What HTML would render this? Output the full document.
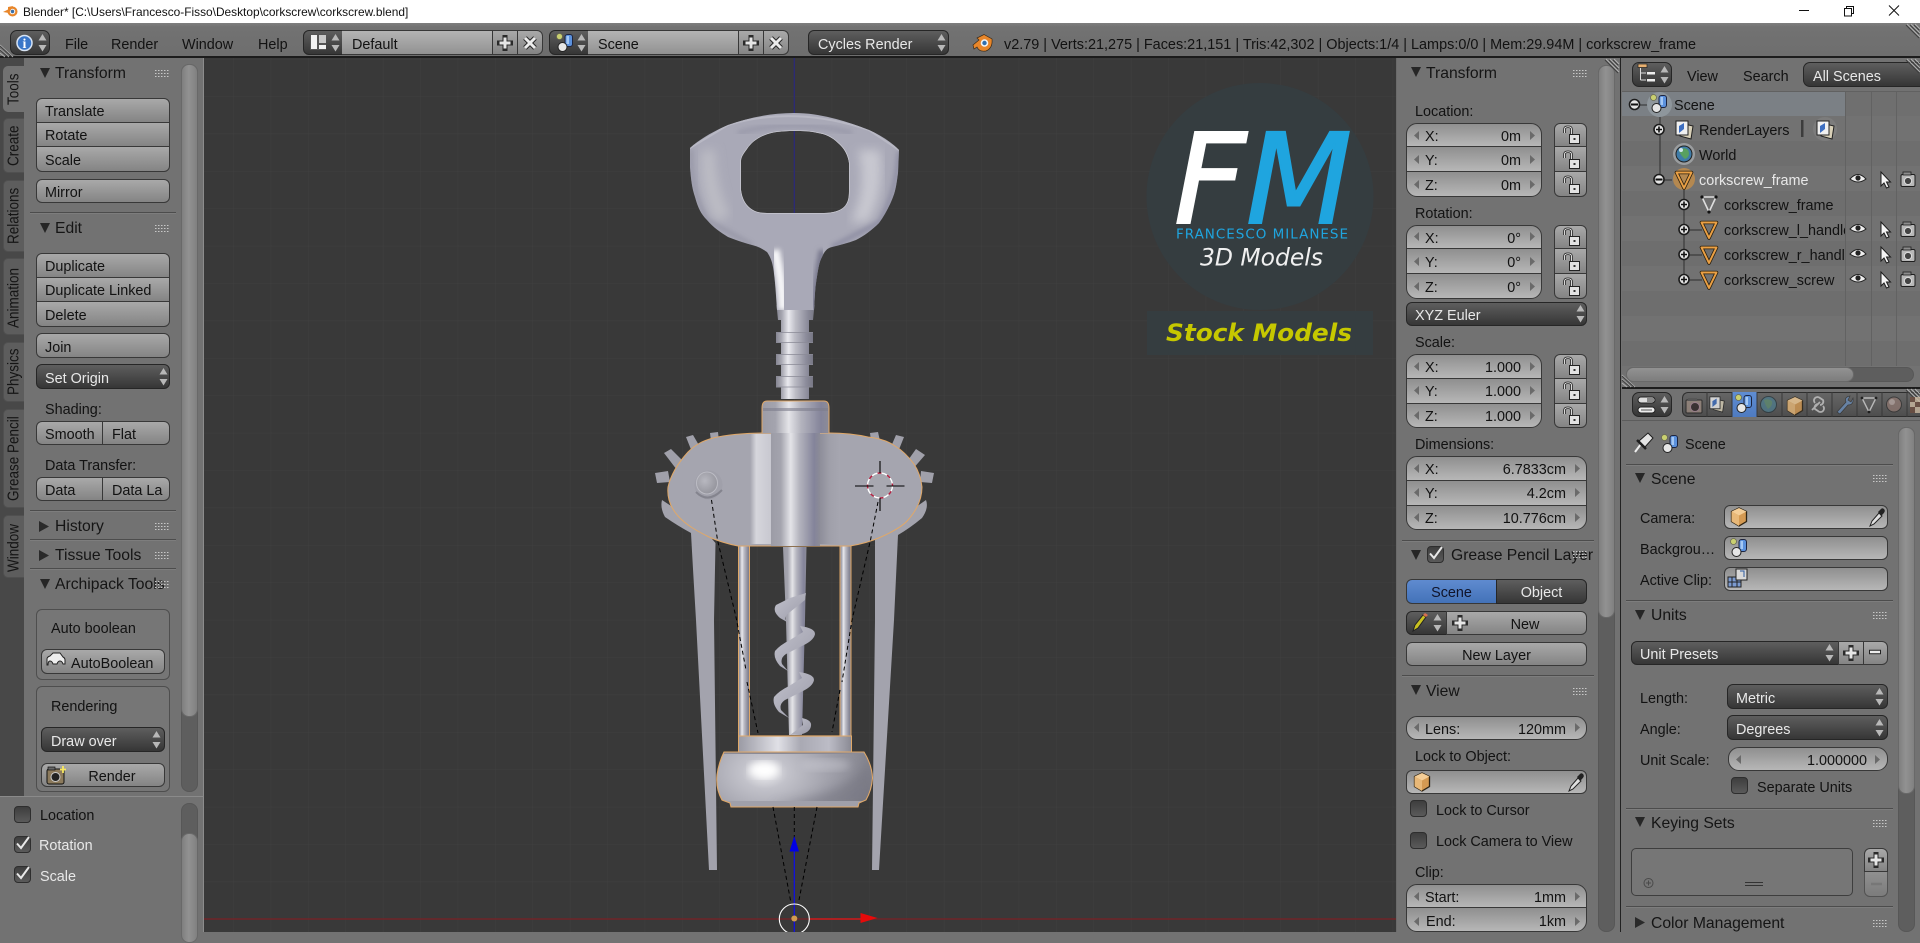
<!DOCTYPE html>
<html><head><meta charset="utf-8"><title>Blender</title>
<style>
html,body{margin:0;padding:0;width:1920px;height:932px;overflow:hidden;background:#727272;font-family:"Liberation Sans",sans-serif}
.a{position:absolute}
.t{position:absolute;white-space:nowrap;line-height:16px;font-size:14.4px;color:#121212;margin-top:1px}
.w{color:#e8e8e8}
.h{font-size:15.7px;line-height:18px;color:#151515}
.c{text-align:center}
.b{position:absolute;box-sizing:border-box;border:1px solid #383838;background:linear-gradient(#a9a9a9,#848484)}
.n{background:linear-gradient(#8f8f8f,#b7b7b7)}
.d{background:linear-gradient(#5e5e5e,#363636);border-color:#262626}
.r{border-radius:6px}.rt{border-radius:6px 6px 0 0}.rb{border-radius:0 0 6px 6px}
.pp{border-radius:11px}.pt{border-radius:11px 11px 0 0}.pb{border-radius:0 0 11px 11px}
.rl{border-radius:6px 0 0 6px}.rr{border-radius:0 6px 6px 0}
.l{position:absolute;height:1px;background:#4c4c4c;box-shadow:0 1px 0 #7d7d7d}
.s{position:absolute;box-sizing:border-box;border-radius:8px;background:#5e5e5e;border:1px solid #575757}
.th{background:linear-gradient(90deg,#7f7f7f,#929292 45%,#808080);border-color:#696969}
.tab{position:absolute;left:3px;width:21px;box-sizing:border-box;background:#5d5d5d;border-radius:5px 0 0 5px;border:1px solid #505050;border-right:0}
.tt{position:absolute;white-space:nowrap;font-size:14.5px;line-height:16px;color:#151515;transform-origin:0 0;transform:rotate(-90deg) scale(.93,1.05)}
.cb{position:absolute;box-sizing:border-box;width:17px;height:17px;border-radius:4px;border:1px solid #2e2e2e;background:linear-gradient(#3e3e3e,#5a5a5a)}
</style></head>
<body>
<!-- VIEWPORT -->
<svg class="a" style="left:0;top:0" width="1920" height="932" viewBox="0 0 1920 932">
<defs>
<pattern id="grid" width="37.4" height="37.4" patternUnits="userSpaceOnUse" patternTransform="translate(794.3 919)"><path d="M0 0H37.4M0 0V37.4" stroke="#404040" stroke-width="1" fill="none"/></pattern>
<linearGradient id="cyl"><stop offset="0" stop-color="#858592"/><stop offset=".14" stop-color="#a6a6b0"/><stop offset=".32" stop-color="#e9e9ee"/><stop offset=".5" stop-color="#bdbdc6"/><stop offset=".82" stop-color="#8b8b9a"/><stop offset="1" stop-color="#777784"/></linearGradient>
<linearGradient id="cyl2"><stop offset="0" stop-color="#9c9ca6"/><stop offset=".2" stop-color="#a4a4ae"/><stop offset=".4" stop-color="#e4e4e8"/><stop offset=".58" stop-color="#b4b4be"/><stop offset=".88" stop-color="#84849a"/><stop offset="1" stop-color="#8c8c98"/></linearGradient>
<linearGradient id="band"><stop offset="0" stop-color="#a4a4ae"/><stop offset=".3" stop-color="#d6d6dc"/><stop offset="1" stop-color="#c8c8d0"/></linearGradient>
<linearGradient id="band2"><stop offset="0" stop-color="#8e8e9a"/><stop offset=".5" stop-color="#a0a0aa"/><stop offset="1" stop-color="#a6a6b0"/></linearGradient>
<linearGradient id="collar"><stop offset="0" stop-color="#9a9aa4"/><stop offset=".35" stop-color="#e0e0e6"/><stop offset=".55" stop-color="#a9a9b3"/><stop offset=".8" stop-color="#bcbcc6"/><stop offset="1" stop-color="#8a8a94"/></linearGradient>
<linearGradient id="blade" x1="0" y1="0" x2="1" y2="1"><stop offset="0" stop-color="#c2c2cc"/><stop offset="1" stop-color="#9a9aa8"/></linearGradient>
<radialGradient id="foot" gradientUnits="userSpaceOnUse" cx="765" cy="772" r="105" gradientTransform="translate(0 232) scale(1 .7)"><stop offset="0" stop-color="#f0f0f2"/><stop offset=".22" stop-color="#c2c2ca"/><stop offset=".6" stop-color="#a2a2ac"/><stop offset="1" stop-color="#84848e"/></radialGradient>
<radialGradient id="riv" cx=".4" cy=".4" r=".7"><stop offset="0" stop-color="#b8b8c0"/><stop offset="1" stop-color="#909098"/></radialGradient>
<filter id="bl"><feGaussianBlur stdDeviation="5"/></filter>
<filter id="bl2"><feGaussianBlur stdDeviation="2.5"/></filter>
<filter id="bl3"><feGaussianBlur stdDeviation="4"/></filter>
<clipPath id="hc"><path clip-rule="evenodd" d="M794,113 C770,113 748,118 728,125 C712,132 700,139 690,148 L690,167 C691,180 692,188 695,197 C698,208 701,214 707,220 C714,228 720,232 728,237 C738,241 745,243 752,245 C760,247 764,250 767,252 C771,258 772,262 773,267 C775,278 776,295 777,310 L814,310 C815,295 815,290 816,283 C818,270 819,262 822,257 C825,250 828,248 832,247 C840,245 848,243 856,240 C864,236 872,230 879,223 C885,215 890,205 893,197 C896,190 897,180 898,173 L899,150 C890,141 880,135 869,130 C856,125 845,121 832,118 C820,115 808,113 794,113 Z M794,131 C782,131 772,132 765,135 C757,138 751,143 747,149 C744,153 741,157 741,161 L741,190 C742,198 745,204 750,208 C755,212 760,213 767,213 L824,213 C832,213 840,211 844,207 C848,203 849,198 849,191 L849,163 C848,155 844,148 838,143 C832,137 825,134 818,133 C810,131 803,131 794,131 Z"/></clipPath>
<clipPath id="fc"><path d="M724,752 C720,760 718,768 717,775 C716,785 718,793 722,800 L730,803 L731,807 L858,807 L859,803 L866,800 C870,793 872,785 872.5,778 C872,768 869,760 864,752 Z"/></clipPath>
</defs>
<rect x="204" y="58" width="1192" height="874" fill="#393939"/>
<rect x="204" y="58" width="1192" height="874" fill="url(#grid)"/>
<line x1="204" y1="919" x2="1396" y2="919" stroke="#702428" stroke-width="1.5"/>
<line x1="794.3" y1="58" x2="794.3" y2="213" stroke="#2b2a78" stroke-width="1.3"/>
<!-- logo -->
<circle cx="1260" cy="196.5" r="113.5" fill="#353d40"/>
<rect x="1147" y="311" width="226" height="44" fill="#353d40"/>
<text x="1174" y="223" font-family="DejaVu Sans" font-style="oblique" font-size="125" fill="#fff" stroke="#fff" stroke-width="2" textLength="72" lengthAdjust="spacingAndGlyphs">F</text>
<text x="1246" y="223" font-family="DejaVu Sans" font-style="oblique" font-size="125" fill="#1fa5df" stroke="#1fa5df" stroke-width="2" textLength="106" lengthAdjust="spacingAndGlyphs">M</text>
<text x="1176" y="238.5" font-family="DejaVu Sans" font-size="13.5" fill="#1fa5df" textLength="172" lengthAdjust="spacing">FRANCESCO MILANESE</text>
<text x="1200" y="265.5" font-family="DejaVu Sans" font-style="oblique" font-size="24" fill="#f0f0f0" textLength="123" lengthAdjust="spacingAndGlyphs">3D Models</text>
<text x="1166" y="341" font-family="DejaVu Sans" font-weight="bold" font-style="oblique" font-size="24" fill="#c6c800" textLength="186" lengthAdjust="spacingAndGlyphs">Stock Models</text>
<!-- legs -->
<path fill="#a3a3ad" d="M662,500 Q660,508 665,517 Q678,526 691,533 Q693,570 696,620 L709,870 L717,870 L714,620 L715.5,543 L700,525 Z"/>
<path fill="#a3a3ad" d="M926,500 Q929,508 922,518 Q910,528 898,535 L894,620 L879,870 L872,870 L875,620 L875,540 L890,525 Z"/>
<!-- teeth -->
<g fill="#a0a0aa">
<path d="M655,473 L668,471 L670,482 L657,483 Z"/><path d="M664,453 L671,449 L684,462 L677,470 Z"/><path d="M686,437 L693,435 L700,447 L692,452 Z"/><path d="M710,433 L718,432 L719,441 L711,441 Z"/>
<path d="M870,433 L878,432 L880,441 L871,441 Z"/><path d="M896,435 L904,437 L898,452 L890,449 Z"/><path d="M916,449 L925,455 L912,470 L906,463 Z"/><path d="M921,471 L934,473 L932,483 L920,482 Z"/>
</g>
<!-- frame columns -->
<rect x="738.5" y="546" width="11" height="190" fill="url(#cyl)" stroke="#e0a868"/>
<rect x="840" y="546" width="11" height="190" fill="url(#cyl)" stroke="#e0a868"/>
<!-- screw -->
<path d="M783,547 H806.5 L805,620 L802,735 H789 L786,620 Z" fill="url(#cyl2)"/>
<g fill="url(#blade)">
<path d="M806,593 L805,600 L790,612 Q783,617 787,622 L780,618 Q772,611 776,605 L790,598Z"/>
<path d="M800,626 Q815,628 815,634 Q814,640 804,645 L786,654 Q780,658 782,664 L788,671 L780,666 Q773,658 775,651 Q780,645 790,640 L803,632 Z"/>
<path d="M799,672 Q814,674 814,680 Q813,686 803,691 L785,700 Q779,704 781,710 L789,718 L779,712 Q772,704 774,697 Q779,691 789,686 L802,678 Z"/>
<path d="M802,718 Q812,720 811,726 Q810,732 802,734 L790,735 Q797,730 803,725Z"/>
</g>
<!-- collar & foot -->
<rect x="738.5" y="736" width="113" height="16" fill="url(#collar)" stroke="#e0a868"/>
<line x1="749" y1="736" x2="840" y2="736" stroke="#e0a868" stroke-width="1.2"/>
<path d="M724,752 C720,760 718,768 717,775 C716,785 718,793 722,800 L730,803 L731,807 L858,807 L859,803 L866,800 C870,793 872,785 872.5,778 C872,768 869,760 864,752 Z" fill="url(#foot)"/>
<g clip-path="url(#fc)"><path d="M770,805 Q850,795 868,760 L880,810 Z" fill="#72727e" opacity=".55" filter="url(#bl)"/><ellipse cx="764" cy="770" rx="15" ry="8" fill="#fff" filter="url(#bl3)"/><ellipse cx="825" cy="765" rx="25" ry="6" fill="#cdcdd5" opacity=".45" filter="url(#bl3)"/><rect x="716" y="801" width="160" height="6" fill="#a0a0aa"/><rect x="716" y="752" width="160" height="2" fill="#8a8a96"/></g>
<path d="M724,752 C720,760 718,768 717,775 C716,785 718,793 722,800 L730,803 L731,807 L858,807 L859,803 L866,800 C870,793 872,785 872.5,778 C872,768 869,760 864,752 Z" fill="none" stroke="#e0a868" stroke-width="1.1"/>
<!-- neck & rings -->
<path d="M776.5,305 H814.5 L813,320 H809 V399 H781 V320 H778 Z" fill="url(#cyl)"/>
<rect x="776" y="332" width="37" height="11" fill="url(#cyl)"/><rect x="776" y="354" width="37" height="11" fill="url(#cyl)"/><rect x="776" y="376" width="37" height="11.5" fill="url(#cyl)"/>
<path d="M776 332.5H813M776 354.5H813M776 376.5H813M776 342.5H813M776 364.5H813M776 387H813" stroke="#8a8a96" stroke-width=".8"/>
<!-- body -->
<path d="M762,433 C745,433 725,435 713,438 C702,441 695,445 688,452 C678,463 671,474 668,487 C667,497 670,507 678,516 C686,525 697,531 709,537 C718,541 728,544 738,546 H850 C862,544 872,541 881,537 C892,532 903,526 908,520 C916,511 922,500 922,487 C921,478 918,470 914,464 C908,456 902,450 895,446 C888,441 878,438 868,437 C855,434 840,433 829,433 Z" fill="#a5a5af" stroke="#e0a868" stroke-width="1"/>
<rect x="750" y="434" width="21" height="110" fill="url(#band)"/>
<rect x="820" y="434" width="20" height="110" fill="url(#band2)"/>
<rect x="771" y="433" width="49" height="113" fill="url(#cyl2)"/>
<path d="M762,433 V408 Q762,401 767,401 H824 Q829,401 829,408 V433" fill="url(#cyl2)" stroke="#e0a868"/>
<rect x="763" y="408" width="65" height="3" fill="#7d7d8c" opacity=".6"/>
<!-- handle -->
<path fill-rule="evenodd" fill="#a9a9b7" d="M794,113 C770,113 748,118 728,125 C712,132 700,139 690,148 L690,167 C691,180 692,188 695,197 C698,208 701,214 707,220 C714,228 720,232 728,237 C738,241 745,243 752,245 C760,247 764,250 767,252 C771,258 772,262 773,267 C775,278 776,295 777,310 L814,310 C815,295 815,290 816,283 C818,270 819,262 822,257 C825,250 828,248 832,247 C840,245 848,243 856,240 C864,236 872,230 879,223 C885,215 890,205 893,197 C896,190 897,180 898,173 L899,150 C890,141 880,135 869,130 C856,125 845,121 832,118 C820,115 808,113 794,113 Z M794,131 C782,131 772,132 765,135 C757,138 751,143 747,149 C744,153 741,157 741,161 L741,190 C742,198 745,204 750,208 C755,212 760,213 767,213 L824,213 C832,213 840,211 844,207 C848,203 849,198 849,191 L849,163 C848,155 844,148 838,143 C832,137 825,134 818,133 C810,131 803,131 794,131 Z"/>
<g clip-path="url(#hc)">
<path d="M715,150 Q715,185 730,215 L716,222 Q698,190 702,150 Z" fill="#bcbcc4" filter="url(#bl)"/>
<path d="M858,150 Q868,190 850,222 L868,222 Q886,190 880,150 Z" fill="#c8c8d0" filter="url(#bl)"/>
<path d="M738,133 Q794,118 852,133" fill="none" stroke="#9494a6" stroke-width="5" opacity=".7" filter="url(#bl2)"/>
<path d="M691,150 Q690,190 707,220 L752,245" fill="none" stroke="#8c8c9c" stroke-width="3" opacity=".8" filter="url(#bl2)"/>
<path d="M899,152 Q897,190 880,222 L832,247" fill="none" stroke="#82829a" stroke-width="4" opacity=".8" filter="url(#bl2)"/>
<path d="M690,148 L728,125 Q794,105 869,130 L899,150" fill="none" stroke="#b8b8c4" stroke-width="2"/>
<path d="M775,250 Q782,280 783,310" stroke="#f6f6f8" stroke-width="9" fill="none" filter="url(#bl2)"/>
<path d="M822,250 Q816,280 814,310" stroke="#74748a" stroke-width="6" fill="none" filter="url(#bl2)"/>
<path d="M794,131 C782,131 772,132 765,135 C757,138 751,143 747,149 C744,153 741,157 741,161 L741,190 C742,198 745,204 750,208 C755,212 760,213 767,213 L824,213 C832,213 840,211 844,207 C848,203 849,198 849,191 L849,163 C848,155 844,148 838,143 C832,137 825,134 818,133 C810,131 803,131 794,131 Z" fill="none" stroke="#cfcfd6" stroke-width="1.2"/>
</g>
<!-- rivets -->
<ellipse cx="708.5" cy="485" rx="14" ry="14.5" fill="#a0a0aa"/><ellipse cx="707" cy="483" rx="10.5" ry="11" fill="url(#riv)" stroke="#bcbcc4"/><path d="M696,492 Q708,504 722,490" fill="none" stroke="#84848e" stroke-width="2"/>
<ellipse cx="880" cy="485" rx="13" ry="14" fill="#a8a8b0"/>
<circle cx="880" cy="485.5" r="12.5" fill="none" stroke="#fff" stroke-width="1.4" stroke-dasharray="6 4"/>
<circle cx="880" cy="485.5" r="12.5" fill="none" stroke="#b82040" stroke-width="1.4" stroke-dasharray="4 6" stroke-dashoffset="-6"/>
<path d="M855 486H873.5M886.5 486H904.5M880 461V473M880 498V511" stroke="#000" stroke-width="1.1"/>
<!-- dashed -->
<g fill="none" stroke="#000" stroke-width="1" stroke-dasharray="4 3">
<path d="M711.5,500 L717.5,540 L736,617 L746,670"/><path d="M747,682 L758,733"/><path d="M773,807 L791,903"/>
<path d="M878,502 L870.5,540 L852,620 L842,682"/><path d="M840,690 L832,732"/><path d="M817,807 L799,900"/>
<path d="M794.3,807 V850"/>
</g>
<!-- manipulators -->
<line x1="794.3" y1="850" x2="794.3" y2="932" stroke="#1010e0" stroke-width="1.3"/>
<path d="M794.3,836 L799,851.5 H789.5 Z" fill="#0000e4"/>
<line x1="809" y1="919" x2="862" y2="919" stroke="#e01818" stroke-width="1.3"/>
<path d="M877.5,918 L860.5,913 V923 Z" fill="#e60a0a"/>
<circle cx="794.3" cy="919" r="15" fill="none" stroke="#fff" stroke-width="1.1"/>
<circle cx="794.3" cy="918.5" r="3" fill="#d09a50"/>
</svg>

<!-- TITLE BAR -->
<div class="a" style="left:0;top:0;width:1920px;height:23px;background:#fff"></div>
<div class="t" style="left:23px;top:3px;font-size:11.9px;color:#111">Blender* [C:\Users\Francesco-Fisso\Desktop\corkscrew\corkscrew.blend]</div>
<!-- HEADER -->
<div class="a" style="left:0;top:23px;width:1920px;height:35px;box-sizing:border-box;background:linear-gradient(#7e7e7e,#727272 12%,#6e6e6e);border-bottom:2px solid #1c1c1c"></div>
<div class="b d" style="left:10px;top:30px;width:40px;height:25px;border-radius:7px"></div>
<div class="t" style="left:65px;top:36px">File</div><div class="t" style="left:111px;top:36px">Render</div><div class="t" style="left:182px;top:36px">Window</div><div class="t" style="left:258px;top:36px">Help</div>
<div class="b d rl" style="left:303px;top:30px;width:40px;height:25px"></div>
<div class="b" style="left:342px;top:30px;width:151px;height:25px;background:linear-gradient(#b4b4b4,#929292);border-left:0"></div>
<div class="b" style="left:492px;top:30px;width:26px;height:25px"></div><div class="b rr" style="left:517px;top:30px;width:26px;height:25px"></div>
<div class="t" style="left:352px;top:36px">Default</div>
<div class="b d rl" style="left:549px;top:30px;width:40px;height:25px"></div>
<div class="b" style="left:588px;top:30px;width:151px;height:25px;background:linear-gradient(#b4b4b4,#929292);border-left:0"></div>
<div class="b" style="left:738px;top:30px;width:26px;height:25px"></div><div class="b rr" style="left:763px;top:30px;width:26px;height:25px"></div>
<div class="t" style="left:598px;top:36px">Scene</div>
<div class="b d r" style="left:808px;top:30px;width:141px;height:25px"></div>
<div class="t w" style="left:818px;top:36px">Cycles Render</div>
<svg class="a" style="left:1004px;top:34px" width="694" height="20"><text x="0" y="15" font-family="Liberation Sans" font-size="14.5" fill="#121212" textLength="692" lengthAdjust="spacingAndGlyphs">v2.79 | Verts:21,275 | Faces:21,151 | Tris:42,302 | Objects:1/4 | Lamps:0/0 | Mem:29.94M | corkscrew_frame</text></svg>

<!-- LEFT TOOL SHELF -->
<div class="a" style="left:0;top:58px;width:204px;height:874px;background:#727272"></div>
<div class="a" style="left:0;top:58px;width:24px;height:739px;background:#484848"></div>
<div class="a" style="left:203px;top:58px;width:1px;height:874px;background:#8c8c8c"></div>
<div class="a" style="left:0;top:796px;width:204px;height:1px;background:#8a8a8a"></div>
<div class="tab" style="top:66px;height:46px;background:#727272;border-color:#727272;width:22px"></div>
<div class="tab" style="top:118px;height:55px"></div><div class="tab" style="top:180px;height:72px"></div><div class="tab" style="top:258px;height:77px"></div><div class="tab" style="top:342px;height:60px"></div><div class="tab" style="top:409px;height:99px"></div><div class="tab" style="top:515px;height:63px"></div>
<div class="tt" style="left:5.5px;top:105px">Tools</div><div class="tt" style="left:5.5px;top:166px">Create</div><div class="tt" style="left:5.5px;top:244px">Relations</div><div class="tt" style="left:5.5px;top:328px">Animation</div><div class="tt" style="left:5.5px;top:395px">Physics</div><div class="tt" style="left:5.5px;top:501px">Grease Pencil</div><div class="tt" style="left:5.5px;top:572px">Window</div>
<div class="s" style="left:181px;top:64px;width:17px;height:728px"></div>
<div class="s th" style="left:181px;top:64px;width:17px;height:653px"></div>
<div class="s" style="left:181px;top:803px;width:17px;height:129px"></div>
<div class="s th" style="left:181px;top:833px;width:17px;height:110px"></div>

<div class="t h" style="left:55px;top:64px">Transform</div>
<div class="b rt" style="left:36px;top:98px;width:134px;height:25px"></div><div class="b" style="left:36px;top:122px;width:134px;height:25px"></div><div class="b rb" style="left:36px;top:146px;width:134px;height:26px"></div>
<div class="t" style="left:45px;top:103px">Translate</div><div class="t" style="left:45px;top:127px">Rotate</div><div class="t" style="left:45px;top:152px">Scale</div>
<div class="b r" style="left:36px;top:179px;width:134px;height:24px"></div><div class="t" style="left:45px;top:184px">Mirror</div>
<div class="l" style="left:30px;top:212px;width:146px"></div>
<div class="t h" style="left:55px;top:219px">Edit</div>
<div class="b rt" style="left:36px;top:253px;width:134px;height:25px"></div><div class="b" style="left:36px;top:277px;width:134px;height:25px"></div><div class="b rb" style="left:36px;top:301px;width:134px;height:26px"></div>
<div class="t" style="left:45px;top:258px">Duplicate</div><div class="t" style="left:45px;top:282px">Duplicate Linked</div><div class="t" style="left:45px;top:307px">Delete</div>
<div class="b r" style="left:36px;top:333px;width:134px;height:25px"></div><div class="t" style="left:45px;top:339px">Join</div>
<div class="b d r" style="left:36px;top:364px;width:134px;height:25px"></div><div class="t w" style="left:45px;top:370px">Set Origin</div>
<div class="t" style="left:45px;top:401px">Shading:</div>
<div class="b rl" style="left:36px;top:421px;width:67px;height:24px"></div><div class="b rr" style="left:102px;top:421px;width:68px;height:24px"></div>
<div class="t" style="left:45px;top:426px">Smooth</div><div class="t" style="left:112px;top:426px">Flat</div>
<div class="t" style="left:45px;top:457px">Data Transfer:</div>
<div class="b rl" style="left:36px;top:477px;width:67px;height:24px"></div><div class="b rr" style="left:102px;top:477px;width:68px;height:24px"></div>
<div class="t" style="left:45px;top:482px">Data</div><div class="t" style="left:112px;top:482px">Data La</div>
<div class="l" style="left:30px;top:510px;width:146px"></div>
<div class="t h" style="left:55px;top:517px">History</div>
<div class="l" style="left:30px;top:539px;width:146px"></div>
<div class="t h" style="left:55px;top:546px">Tissue Tools</div>
<div class="l" style="left:30px;top:568px;width:146px"></div>
<div class="t h" style="left:55px;top:575px">Archipack Tools</div>
<div class="b r" style="left:36px;top:609px;width:134px;height:71px;background:#767676;border-color:#4e4e4e"></div>
<div class="t" style="left:51px;top:620px">Auto boolean</div>
<div class="b r" style="left:41px;top:649px;width:124px;height:25px"></div><div class="t" style="left:71px;top:655px">AutoBoolean</div>
<div class="b r" style="left:36px;top:686px;width:134px;height:106px;background:#767676;border-color:#4e4e4e"></div>
<div class="t" style="left:51px;top:698px">Rendering</div>
<div class="b d r" style="left:41px;top:727px;width:124px;height:25px"></div><div class="t w" style="left:51px;top:733px">Draw over</div>
<div class="b r" style="left:41px;top:763px;width:124px;height:24px"></div><div class="t c" style="left:41px;width:142px;top:768px">Render</div>
<div class="cb" style="left:14px;top:806px"></div><div class="t" style="left:40px;top:807px">Location</div>
<div class="cb" style="left:14px;top:836px"></div><div class="t w" style="left:39px;top:837px">Rotation</div>
<div class="cb" style="left:14px;top:866px"></div><div class="t w" style="left:40px;top:868px">Scale</div>

<!-- N PANEL -->
<div class="a" style="left:1396px;top:58px;width:225px;height:874px;background:#727272"></div>
<div class="a" style="left:1396px;top:58px;width:1px;height:874px;background:#6a6a6a"></div>
<div class="s" style="left:1598px;top:65px;width:17px;height:867px"></div>
<div class="s th" style="left:1598px;top:65px;width:17px;height:553px"></div>
<div class="t h" style="left:1426px;top:64px">Transform</div>
<div class="t" style="left:1415px;top:103px">Location:</div>
<div class="b n pt" style="left:1406px;top:123px;width:136px;height:24px"></div><div class="b n" style="left:1406px;top:146px;width:136px;height:26px"></div><div class="b n pb" style="left:1406px;top:171px;width:136px;height:26px"></div>
<div class="t" style="left:1425px;top:128px">X:</div><div class="t" style="right:399px;top:128px">0m</div><div class="t" style="left:1425px;top:152px">Y:</div><div class="t" style="right:399px;top:152px">0m</div><div class="t" style="left:1425px;top:177px">Z:</div><div class="t" style="right:399px;top:177px">0m</div>
<div class="b rt" style="left:1554px;top:123px;width:33px;height:24px"></div><div class="b" style="left:1554px;top:146px;width:33px;height:26px"></div><div class="b rb" style="left:1554px;top:171px;width:33px;height:26px"></div>
<div class="t" style="left:1415px;top:205px">Rotation:</div>
<div class="b n pt" style="left:1406px;top:225px;width:136px;height:24px"></div><div class="b n" style="left:1406px;top:248px;width:136px;height:26px"></div><div class="b n pb" style="left:1406px;top:273px;width:136px;height:26px"></div>
<div class="t" style="left:1425px;top:230px">X:</div><div class="t" style="right:399px;top:230px">0°</div><div class="t" style="left:1425px;top:254px">Y:</div><div class="t" style="right:399px;top:254px">0°</div><div class="t" style="left:1425px;top:279px">Z:</div><div class="t" style="right:399px;top:279px">0°</div>
<div class="b rt" style="left:1554px;top:225px;width:33px;height:24px"></div><div class="b" style="left:1554px;top:248px;width:33px;height:26px"></div><div class="b rb" style="left:1554px;top:273px;width:33px;height:26px"></div>
<div class="b d r" style="left:1406px;top:302px;width:181px;height:24px"></div><div class="t w" style="left:1415px;top:307px">XYZ Euler</div>
<div class="t" style="left:1415px;top:334px">Scale:</div>
<div class="b n pt" style="left:1406px;top:354px;width:136px;height:25px"></div><div class="b n" style="left:1406px;top:378px;width:136px;height:26px"></div><div class="b n pb" style="left:1406px;top:403px;width:136px;height:25px"></div>
<div class="t" style="left:1425px;top:359px">X:</div><div class="t" style="right:399px;top:359px">1.000</div><div class="t" style="left:1425px;top:383px">Y:</div><div class="t" style="right:399px;top:383px">1.000</div><div class="t" style="left:1425px;top:408px">Z:</div><div class="t" style="right:399px;top:408px">1.000</div>
<div class="b rt" style="left:1554px;top:354px;width:33px;height:25px"></div><div class="b" style="left:1554px;top:378px;width:33px;height:26px"></div><div class="b rb" style="left:1554px;top:403px;width:33px;height:25px"></div>
<div class="t" style="left:1415px;top:436px">Dimensions:</div>
<div class="b n pt" style="left:1406px;top:456px;width:181px;height:25px"></div><div class="b n" style="left:1406px;top:480px;width:181px;height:26px"></div><div class="b n pb" style="left:1406px;top:505px;width:181px;height:25px"></div>
<div class="t" style="left:1425px;top:461px">X:</div><div class="t" style="right:354px;top:461px">6.7833cm</div><div class="t" style="left:1425px;top:485px">Y:</div><div class="t" style="right:354px;top:485px">4.2cm</div><div class="t" style="left:1425px;top:510px">Z:</div><div class="t" style="right:354px;top:510px">10.776cm</div>
<div class="l" style="left:1402px;top:540px;width:192px"></div>
<div class="cb" style="left:1427px;top:546px"></div>
<div class="t h" style="left:1451px;top:546px">Grease Pencil Layer</div>
<div class="b r" style="left:1406px;top:579px;width:91px;height:25px;background:linear-gradient(#5f8bd0,#4372b8);border-radius:6px 0 0 6px"></div><div class="b d rr" style="left:1496px;top:579px;width:91px;height:25px"></div>
<div class="t c" style="left:1406px;width:91px;top:584px;color:#10142a">Scene</div><div class="t c w" style="left:1496px;width:91px;top:584px">Object</div>
<div class="b d rl" style="left:1406px;top:611px;width:41px;height:24px"></div><div class="b rr" style="left:1446px;top:611px;width:141px;height:24px"></div><div class="t c" style="left:1446px;width:158px;top:616px">New</div>
<div class="b r" style="left:1406px;top:642px;width:181px;height:24px"></div><div class="t c" style="left:1406px;width:181px;top:647px">New Layer</div>
<div class="l" style="left:1402px;top:675px;width:192px"></div>
<div class="t h" style="left:1426px;top:682px">View</div>
<div class="b n pp" style="left:1406px;top:716px;width:181px;height:24px"></div><div class="t" style="left:1425px;top:721px">Lens:</div><div class="t" style="right:354px;top:721px">120mm</div>
<div class="t" style="left:1415px;top:748px">Lock to Object:</div>
<div class="b n r" style="left:1406px;top:770px;width:181px;height:24px"></div>
<div class="cb" style="left:1410px;top:800px"></div><div class="t" style="left:1436px;top:802px">Lock to Cursor</div>
<div class="cb" style="left:1410px;top:832px"></div><div class="t" style="left:1436px;top:833px">Lock Camera to View</div>
<div class="t" style="left:1415px;top:864px">Clip:</div>
<div class="b n pt" style="left:1406px;top:884px;width:181px;height:24px"></div><div class="b n pb" style="left:1406px;top:907px;width:181px;height:25px"></div>
<div class="t" style="left:1425px;top:889px">Start:</div><div class="t" style="right:354px;top:889px">1mm</div><div class="t" style="left:1426px;top:913px">End:</div><div class="t" style="right:354px;top:913px">1km</div>

<!-- RIGHT COLUMN -->
<div class="a" style="left:1620px;top:58px;width:300px;height:874px;background:#727272;border-left:1.5px solid #222;box-sizing:border-box"></div>
<!-- outliner -->
<div class="b d r" style="left:1632px;top:62px;width:40px;height:25px;border-radius:7px"></div>
<div class="t" style="left:1687px;top:68px">View</div><div class="t" style="left:1743px;top:68px">Search</div>
<div class="b d" style="left:1803px;top:62px;width:117px;height:25px;border-radius:7px 0 0 7px;border-right:0"></div><div class="t w" style="left:1813px;top:68px">All Scenes</div>
<div class="a" style="left:1622px;top:91px;width:298px;height:1px;background:#616161"></div>
<div class="a" style="left:1622px;top:92px;width:298px;height:24px;background:#6f6f6f"></div>
<div class="a" style="left:1622px;top:92px;width:223px;height:24px;background:#7b8085"></div>
<div class="a" style="left:1622px;top:116px;width:298px;height:25px;background:#727272"></div>
<div class="a" style="left:1622px;top:141px;width:298px;height:25px;background:#6e6e6e"></div>
<div class="a" style="left:1622px;top:166px;width:298px;height:25px;background:#727272"></div>
<div class="a" style="left:1622px;top:191px;width:298px;height:25px;background:#6e6e6e"></div>
<div class="a" style="left:1622px;top:216px;width:298px;height:25px;background:#727272"></div>
<div class="a" style="left:1622px;top:241px;width:298px;height:25px;background:#6e6e6e"></div>
<div class="a" style="left:1622px;top:266px;width:298px;height:25px;background:#727272"></div>
<div class="a" style="left:1622px;top:291px;width:298px;height:25px;background:#6e6e6e"></div>
<div class="a" style="left:1622px;top:316px;width:298px;height:25px;background:#727272"></div>
<div class="a" style="left:1622px;top:341px;width:298px;height:25px;background:#6e6e6e"></div>
<div class="a" style="left:1845px;top:92px;width:1px;height:274px;background:#626262"></div><div class="a" style="left:1871px;top:92px;width:1px;height:274px;background:#626262"></div><div class="a" style="left:1896px;top:92px;width:1px;height:274px;background:#626262"></div>
<div class="t" style="left:1674px;top:97px">Scene</div>
<div class="t" style="left:1699px;top:122px">RenderLayers</div>
<div class="t" style="left:1699px;top:147px">World</div>
<div class="t w" style="left:1699px;top:172px">corkscrew_frame</div>
<div class="t" style="left:1724px;top:197px">corkscrew_frame</div>
<div class="a" style="left:1724px;top:222px;width:121px;height:19px;overflow:hidden"><div class="t" style="left:0;top:0">corkscrew_l_handle</div></div>
<div class="a" style="left:1724px;top:247px;width:121px;height:19px;overflow:hidden"><div class="t" style="left:0;top:0">corkscrew_r_handle</div></div>
<div class="t" style="left:1724px;top:272px">corkscrew_screw</div>
<div class="s" style="left:1626px;top:367px;width:288px;height:15px"></div>
<div class="s" style="left:1626px;top:367px;width:228px;height:15px;background:linear-gradient(#929292,#7d7d7d);border-color:#696969"></div>
<div class="a" style="left:1622px;top:387px;width:298px;height:2px;background:#1c1c1c"></div>
<!-- properties -->
<div class="a" style="left:1622px;top:420px;width:298px;height:1px;background:#5c5c5c"></div>
<div class="b d r" style="left:1632px;top:392px;width:40px;height:25px;border-radius:7px"></div>
<div class="a" style="left:1682px;top:392px;width:238px;height:25px;box-sizing:border-box;background:linear-gradient(#666,#4e4e4e);border:1px solid #2e2e2e;border-right:0;border-radius:6px 0 0 6px"></div>
<div class="a" style="left:1732px;top:392px;width:25px;height:25px;background:linear-gradient(#5f8dd3,#4f7bc0)"></div>
<div class="t" style="left:1685px;top:436px">Scene</div>
<div class="l" style="left:1626px;top:464px;width:267px"></div>
<div class="t h" style="left:1651px;top:470px">Scene</div>
<div class="t" style="left:1640px;top:510px">Camera:</div><div class="b n r" style="left:1724px;top:505px;width:164px;height:24px"></div>
<div class="t" style="left:1640px;top:541px">Backgrou…</div><div class="b n r" style="left:1724px;top:536px;width:164px;height:24px"></div>
<div class="t" style="left:1640px;top:572px">Active Clip:</div><div class="b n r" style="left:1724px;top:567px;width:164px;height:24px"></div>
<div class="l" style="left:1626px;top:600px;width:267px"></div>
<div class="t h" style="left:1651px;top:606px">Units</div>
<div class="b d rl" style="left:1631px;top:641px;width:208px;height:24px"></div><div class="t w" style="left:1640px;top:646px">Unit Presets</div>
<div class="b" style="left:1838px;top:641px;width:26px;height:24px"></div><div class="b rr" style="left:1863px;top:641px;width:25px;height:24px"></div>
<div class="t" style="left:1640px;top:690px">Length:</div><div class="b d r" style="left:1727px;top:684px;width:161px;height:25px"></div><div class="t w" style="left:1736px;top:690px">Metric</div>
<div class="t" style="left:1640px;top:721px">Angle:</div><div class="b d r" style="left:1727px;top:715px;width:161px;height:25px"></div><div class="t w" style="left:1736px;top:721px">Degrees</div>
<div class="t" style="left:1640px;top:752px">Unit Scale:</div><div class="b n pp" style="left:1728px;top:747px;width:160px;height:24px"></div><div class="t" style="right:53px;top:752px">1.000000</div>
<div class="cb" style="left:1731px;top:777px"></div><div class="t" style="left:1757px;top:779px">Separate Units</div>
<div class="l" style="left:1626px;top:808px;width:267px"></div>
<div class="t h" style="left:1651px;top:814px">Keying Sets</div>
<div class="a" style="left:1631px;top:848px;width:222px;height:48px;box-sizing:border-box;border:1px solid #3e3e3e;border-radius:5px;background:#767676"></div>
<div class="b rt" style="left:1864px;top:848px;width:24px;height:24px"></div><div class="b rb" style="left:1864px;top:871px;width:24px;height:26px;opacity:.55"></div>
<div class="l" style="left:1626px;top:906px;width:267px"></div>
<div class="t h" style="left:1651px;top:914px">Color Management</div>
<div class="s" style="left:1898px;top:427px;width:17px;height:505px"></div>
<div class="s th" style="left:1898px;top:427px;width:17px;height:367px"></div>

<!-- ICON OVERLAY -->
<svg class="a" style="left:0;top:0" width="1920" height="932" viewBox="0 0 1920 932">
<defs>
<symbol id="ud" width="9" height="18" overflow="visible"><path d="M4.5 0L8.5 6.5H.5ZM4.5 17.5L.5 11H8.5Z" fill="#b8b8b8"/></symbol>
<symbol id="ad" width="10" height="10"><path d="M0 0H10L5 10Z" fill="#262626"/></symbol>
<symbol id="ar" width="10" height="11"><path d="M0 0L10 5.5L0 11Z" fill="#2a2a2a"/></symbol>
<symbol id="tl" width="6" height="9"><path d="M5 0V9L0 4.5Z" fill="#6a6a6a"/></symbol>
<symbol id="tr" width="6" height="9"><path d="M0 0V9L5 4.5Z" fill="#6a6a6a"/></symbol>
<symbol id="dots" width="15" height="7"><path d="M0 .5H15M0 3.5H15M0 6.5H15" stroke="#c8c8c8" stroke-dasharray="1.5 1.5" fill="none"/></symbol>
<symbol id="plus" width="16" height="16"><path d="M8 1.5V14.5M1.5 8H14.5" stroke="#2a2a2a" stroke-width="5" stroke-linecap="square" fill="none"/><path d="M8 2.5V13.5M2.5 8H13.5" stroke="#e6e6e6" stroke-width="3" fill="none"/></symbol>
<symbol id="xx" width="16" height="16"><path d="M3 3L13 13M13 3L3 13" stroke="#2a2a2a" stroke-width="5" fill="none"/><path d="M3 3L13 13M13 3L3 13" stroke="#ececec" stroke-width="3" fill="none"/></symbol>
<symbol id="scn" width="20" height="20" overflow="visible"><circle cx="3.5" cy="3.5" r="3" fill="#c9cf70" stroke="#6a6a50" stroke-width=".8"/><rect x="9" y="1.5" width="7.5" height="12" rx="2.5" fill="#5b91dd" stroke="#1c2440"/><rect x="10.5" y="3" width="2.5" height="8" fill="#a4c8f4"/><circle cx="6.5" cy="14" r="4.5" fill="#e6e6e6" stroke="#222"/></symbol>
<symbol id="lock" width="18" height="18" overflow="visible"><path d="M2.5 7V3.5Q2.5 .8 5.5 .8H6.5Q9.5 .8 9.5 3.5V9" fill="none" stroke="#1a1a1a" stroke-width="2.4"/><path d="M2.5 7V3.5Q2.5 .8 5.5 .8H6.5Q9.5 .8 9.5 3.5V9" fill="none" stroke="#f0f0f0" stroke-width=".9"/><rect x="7.5" y="8.5" width="10" height="9" fill="#e2e2e2" stroke="#222"/><rect x="11.5" y="12" width="2" height="2" fill="#333"/></symbol>
<symbol id="eye" width="16" height="12" overflow="visible"><path d="M0 6Q8 -3 16 6Q8 12 0 6Z" fill="#eee" stroke="#222"/><circle cx="8" cy="5" r="2.6" fill="#222"/></symbol>
<symbol id="cur" width="12" height="18" overflow="visible"><path d="M2 1V15L5 12L7.5 17L10 16L7.5 11H11.5Z" fill="#f4f4f4" stroke="#1c1c1c"/></symbol>
<symbol id="cam" width="16" height="16" overflow="visible"><rect x="1" y="3.5" width="14" height="12" rx="1.5" fill="#b8b8b8" stroke="#1e1e1e"/><rect x="3" y="1" width="8" height="3" fill="#8c8c8c" stroke="#1e1e1e" stroke-width=".8"/><circle cx="8" cy="10" r="3.6" fill="#444" stroke="#ddd" stroke-width="1"/></symbol>
<symbol id="ep" width="13" height="13" overflow="visible"><circle cx="6.5" cy="6.5" r="5" fill="#e4e4e4" stroke="#1c1c1c" stroke-width="1.6"/><path d="M3.5 6.5H9.5M6.5 3.5V9.5" stroke="#111" stroke-width="1.6"/></symbol>
<symbol id="em" width="13" height="13" overflow="visible"><circle cx="6.5" cy="6.5" r="5" fill="#e4e4e4" stroke="#1c1c1c" stroke-width="1.6"/><path d="M3 6.5H10" stroke="#111" stroke-width="2"/></symbol>
<symbol id="tri" width="18" height="18" overflow="visible"><path d="M1.5 1.5H16.5L9 17Z" fill="none" stroke="#2a2010" stroke-width="3.6" stroke-linejoin="round"/><path d="M1.5 1.5H16.5L9 17Z" fill="none" stroke="#eba044" stroke-width="2" stroke-linejoin="round"/></symbol>
<symbol id="cube" width="18" height="20" overflow="visible"><path d="M9 1L16.5 4.5V14.5L9 19L1.5 14.5V4.5Z" fill="#d59a52" stroke="#2e2414" stroke-width="1.3"/><path d="M9 1L16.5 4.5L9 8.5L1.5 4.5Z" fill="#f4cd96"/><path d="M1.5 4.5L9 8.5V19L1.5 14.5Z" fill="#e8b878"/></symbol>
<symbol id="drop" width="16" height="20" overflow="visible"><path d="M1 19L3 14L10 6L13 9L5 17Z" fill="#e0e0e0" stroke="#222"/><path d="M9 5L11 3Q13 0 15 2T14 7L12 9Z" fill="#222"/></symbol>
<symbol id="rl" width="20" height="20" overflow="visible"><path d="M5 3L18 6L16 19L5 16Z" fill="#d8d0b8" stroke="#222"/><rect x="1" y="1" width="12" height="14" fill="#f0f0f0" stroke="#222"/><path d="M4 13V6L9 3V9Z" fill="#3d6ec0"/></symbol>
<symbol id="hatch" width="14" height="14" overflow="visible"><path d="M1 0L14 13M5 0L14 9M9 0L14 5" stroke="#b0b0b0" stroke-width="1" fill="none"/><path d="M0 1L13 14M4 1L13 10M8 1L13 6" stroke="#3e3e3e" stroke-width="1" fill="none"/></symbol>
<symbol id="chk" width="17" height="17" overflow="visible"><path d="M3 7.5L7 12L15 1" fill="none" stroke="#e8e8e8" stroke-width="2"/></symbol>
</defs>
<!-- window controls -->
<path d="M1799 10.5H1809" stroke="#111" stroke-width="1"/>
<rect x="1844.5" y="8.5" width="7" height="7.5" fill="none" stroke="#111"/><path d="M1846.5 8.5V6.5H1853.5V13.5H1851.5" fill="none" stroke="#111"/>
<path d="M1889 5.5L1899 15.5M1899 5.5L1889 15.5" stroke="#111" stroke-width="1"/>
<!-- blender title icon -->
<circle cx="12.5" cy="11.5" r="5" fill="#e8862a"/><circle cx="12.5" cy="11.5" r="2.8" fill="#f4f4f4"/><circle cx="12.5" cy="11.5" r="1.7" fill="#3a6fa8"/><path d="M3 12L8 9.5L8 7L13 6L9 13Z" fill="#e8862a"/>
<!-- corners -->
<g transform="translate(0 43)"><path d="M0 2L13 14M0 6L9 14M0 10L5 14" stroke="#b0b0b0" fill="none"/><path d="M0 3L12 14M0 7L8 14" stroke="#3e3e3e" fill="none"/></g>
<use href="#hatch" x="1906" y="24"/><use href="#hatch" x="1605" y="59"/><use href="#hatch" x="1906" y="59"/><use href="#hatch" x="1906" y="389"/>
<g transform="translate(1622 373)"><path d="M0 2L13 14M0 6L9 14M0 10L5 14" stroke="#b0b0b0" fill="none"/><path d="M0 3L12 14M0 7L8 14" stroke="#3e3e3e" fill="none"/></g>
<!-- header icons -->
<circle cx="24.5" cy="43" r="7.5" fill="#3a76c8" stroke="#d8e4f4" stroke-width="1.5"/><text x="24.5" y="48" text-anchor="middle" font-family="Liberation Serif" font-weight="bold" font-size="14" fill="#fff">i</text>
<use href="#ud" x="38" y="34"/>
<rect x="310" y="34" width="16" height="16" fill="#555"/><rect x="311" y="35" width="6" height="14" fill="#f2f2f2"/><rect x="319" y="35" width="7" height="8" fill="#c8c8c8"/><rect x="319" y="45" width="7" height="4" fill="#f2f2f2"/>
<use href="#ud" x="331" y="34"/>
<use href="#plus" x="497" y="35"/><use href="#xx" x="522" y="35"/>
<use href="#scn" x="556" y="33"/><use href="#ud" x="577" y="34"/>
<use href="#plus" x="743" y="35"/><use href="#xx" x="768" y="35"/>
<use href="#ud" x="937" y="34"/>
<g><path d="M973 45L979 40L977 38L984 34.5L992 39Q993 48 986 51Q979 52 977 47L974 49Z" fill="#e8862a" stroke="#3c2a16" stroke-width=".7"/><circle cx="984.5" cy="43" r="3.8" fill="#f2f2f2"/><circle cx="984.5" cy="43" r="2.2" fill="#2f6eae"/></g>
<!-- left panel -->
<use href="#ad" x="40" y="68"/><use href="#dots" x="155" y="70"/>
<use href="#ad" x="40" y="223"/><use href="#dots" x="155" y="225"/>
<use href="#ar" x="39" y="521"/><use href="#dots" x="155" y="523"/>
<use href="#ar" x="39" y="550"/><use href="#dots" x="155" y="552"/>
<use href="#ad" x="40" y="579"/><use href="#dots" x="155" y="581"/>
<use href="#ud" x="159" y="368"/><use href="#ud" x="152" y="731"/>
<path d="M47 665V659Q47 657 50 656L53 653H60L63 657Q65 658 65 660V664H63Q62 661 60 661T57 664H53Q52 661 50 661T48 665Z" fill="#eee" stroke="#222" stroke-width="1"/>
<g transform="translate(46 766)"><rect x="1" y="3" width="17" height="15" rx="2" fill="#8c7a5c" stroke="#111"/><rect x="2" y="1" width="7" height="3" fill="#666" stroke="#111" stroke-width=".7"/><circle cx="9.5" cy="11" r="4.5" fill="#222" stroke="#ccc"/><path d="M17 0V7M14 3.5H20" stroke="#f8e860" stroke-width="1.8"/></g>
<use href="#chk" x="14" y="836"/><use href="#chk" x="14" y="866"/>
<!-- N panel -->
<use href="#ad" x="1411" y="67"/><use href="#dots" x="1573" y="70"/>
<g>
<use href="#tl" x="1414" y="131"/><use href="#tr" x="1530" y="131"/><use href="#tl" x="1414" y="155"/><use href="#tr" x="1530" y="155"/><use href="#tl" x="1414" y="180"/><use href="#tr" x="1530" y="180"/>
<use href="#tl" x="1414" y="232"/><use href="#tr" x="1530" y="232"/><use href="#tl" x="1414" y="257"/><use href="#tr" x="1530" y="257"/><use href="#tl" x="1414" y="282"/><use href="#tr" x="1530" y="282"/>
<use href="#tl" x="1414" y="362"/><use href="#tr" x="1530" y="362"/><use href="#tl" x="1414" y="386"/><use href="#tr" x="1530" y="386"/><use href="#tl" x="1414" y="411"/><use href="#tr" x="1530" y="411"/>
<use href="#tl" x="1414" y="464"/><use href="#tr" x="1575" y="464"/><use href="#tl" x="1414" y="488"/><use href="#tr" x="1575" y="488"/><use href="#tl" x="1414" y="513"/><use href="#tr" x="1575" y="513"/>
<use href="#tl" x="1414" y="723"/><use href="#tr" x="1575" y="723"/><use href="#tl" x="1414" y="892"/><use href="#tr" x="1575" y="892"/><use href="#tl" x="1414" y="917"/><use href="#tr" x="1575" y="917"/>
<use href="#tl" x="1736" y="755"/><use href="#tr" x="1875" y="755"/>
</g>
<use href="#lock" x="1562" y="126"/><use href="#lock" x="1562" y="151"/><use href="#lock" x="1562" y="176"/>
<use href="#lock" x="1562" y="228"/><use href="#lock" x="1562" y="253"/><use href="#lock" x="1562" y="278"/>
<use href="#lock" x="1562" y="357"/><use href="#lock" x="1562" y="382"/><use href="#lock" x="1562" y="407"/>
<use href="#ud" x="1576" y="305"/>
<use href="#ad" x="1411" y="550"/><use href="#chk" x="1427" y="546"/><use href="#dots" x="1573" y="551"/>
<g transform="translate(1411 613)"><path d="M2 18L4 12L12 2L15 4L7 15Z" fill="#c8c020" stroke="#222"/><path d="M12 2L14 0L17 2L15 4Z" fill="#d87050"/></g>
<use href="#ud" x="1433" y="614"/>
<use href="#plus" x="1452" y="615"/>
<use href="#ad" x="1411" y="685"/><use href="#dots" x="1573" y="688"/>
<use href="#cube" x="1413" y="772"/><use href="#drop" x="1568" y="772"/>
<!-- outliner -->
<g transform="translate(1638 64)"><rect x="0" y="0" width="9" height="3.5" fill="#e8b070" stroke="#222" stroke-width=".7"/><path d="M2.5 4V16M2.5 9H8M2.5 16H8" stroke="#ddd" fill="none"/><rect x="9" y="8" width="8" height="2.5" fill="#eee"/><rect x="9" y="15" width="8" height="2.5" fill="#eee"/></g>
<use href="#ud" x="1660" y="66"/>
<path d="M1660 115V180M1684 190V280M1634 105H1650M1659 180H1672M1684 230H1702M1684 255H1702M1684 280H1702" stroke="#2e2e2e" stroke-width="1" fill="none"/>
<circle cx="1659.5" cy="104.5" r="12.5" fill="#8e969c"/><use href="#scn" x="1650" y="94"/>
<use href="#em" x="1628" y="98"/>
<use href="#ep" x="1652.5" y="123"/><use href="#rl" x="1675" y="120"/>
<rect x="1801" y="120" width="2.5" height="17" fill="#3c3c3c"/><circle cx="1825" cy="129" r="12" fill="#7c7c7c"/><use href="#rl" x="1816" y="120"/>
<circle cx="1684" cy="154" r="11" fill="#c0c4c8" opacity=".55"/><circle cx="1684" cy="154" r="8" fill="#3f7ca8" stroke="#222"/><path d="M1679 151Q1684 146 1688 150Q1691 156 1685 159Q1681 156 1679 151Z" fill="#58a060"/><circle cx="1681" cy="150" r="2" fill="#cfe4f0"/>
<circle cx="1684" cy="179" r="11" fill="#b48850"/><use href="#tri" x="1675" y="171"/>
<use href="#em" x="1652.5" y="173"/>
<use href="#ep" x="1677.5" y="198"/><use href="#ep" x="1677.5" y="223"/><use href="#ep" x="1677.5" y="248"/><use href="#ep" x="1677.5" y="273"/>
<g transform="translate(1700 195)"><path d="M2 2H16L9 17Z" fill="none" stroke="#dedede" stroke-width="1.6"/><circle cx="2" cy="2" r="1.6" fill="#111"/><circle cx="16" cy="2" r="1.6" fill="#111"/><circle cx="9" cy="17" r="1.6" fill="#111"/></g>
<use href="#tri" x="1700" y="221"/><use href="#tri" x="1700" y="246"/><use href="#tri" x="1700" y="271"/>
<use href="#eye" x="1850" y="173"/><use href="#cur" x="1879" y="171"/><use href="#cam" x="1900" y="171"/>
<use href="#eye" x="1850" y="223"/><use href="#cur" x="1879" y="221"/><use href="#cam" x="1900" y="221"/>
<use href="#eye" x="1850" y="248"/><use href="#cur" x="1879" y="246"/><use href="#cam" x="1900" y="246"/>
<use href="#eye" x="1850" y="273"/><use href="#cur" x="1879" y="271"/><use href="#cam" x="1900" y="271"/>
<!-- properties tabs -->
<g transform="translate(1638 396)"><rect x="0" y="1" width="17" height="6" rx="3" fill="#ddd" stroke="#222"/><rect x="9" y="2" width="7" height="4" fill="#888"/><rect x="0" y="11" width="17" height="6" rx="3" fill="#eee" stroke="#222"/><path d="M3 14H14" stroke="#555"/></g>
<use href="#ud" x="1660" y="396"/>
<path d="M1707 392V417M1732 392V417M1757 392V417M1782 392V417M1807 392V417M1832 392V417M1857 392V417M1882 392V417M1907 392V417" stroke="#383838"/>
<g opacity=".8">
<g transform="translate(1686 397)"><rect x="0" y="3" width="16" height="13" rx="1" fill="#9a8a80" stroke="#222"/><rect x="2" y="1" width="9" height="3" fill="#555"/><circle cx="9" cy="10" r="4.5" fill="#332a2a" stroke="#a89"/></g>
<g transform="translate(1709 396) scale(.85)"><use href="#rl"/></g>
<circle cx="1768.5" cy="404.5" r="8" fill="#4f7a8a" stroke="#2c3a40"/><path d="M1764 400Q1768 398 1772 401Q1773 406 1768 409Q1765 405 1764 400Z" fill="#5e8a70"/>
<g transform="translate(1786 396)"><use href="#cube"/></g>
<path d="M1812 410L1820 402M1815 403A3.5 3.5 0 0 1 1820 398L1823 400A3.5 3.5 0 0 1 1820 405M1823 406A3.5 3.5 0 0 1 1818 411L1815 409A3.5 3.5 0 0 1 1818 404" fill="none" stroke="#c6c6c6" stroke-width="1.8"/>
<path d="M1837 412L1846 402Q1844 397 1850 396L1848 400L1851 402L1853 398Q1854 405 1848 405L1840 414Z" fill="#6b8db8" stroke="#333" stroke-width=".7"/>
<path d="M1862 398H1876L1869 412Z" fill="none" stroke="#cfcfcf" stroke-width="1.4"/><circle cx="1862" cy="398" r="1.4" fill="#111"/><circle cx="1876" cy="398" r="1.4" fill="#111"/><circle cx="1869" cy="412" r="1.4" fill="#111"/>
<circle cx="1894" cy="404.5" r="7.5" fill="#8c7670" stroke="#333"/><circle cx="1892" cy="402" r="3" fill="#b4a4a0"/>
<g transform="translate(1910 397)"><path d="M0 0H10V16H0Z" fill="#cbb8a0"/><path d="M0 0H5V5H0ZM5 5H10V10H5ZM0 10H5V16H0Z" fill="#6e4e40"/></g>
</g>
<g transform="translate(1735 394)"><use href="#scn"/></g>
<!-- props content -->
<g transform="translate(1634 432)"><path d="M1 20L7 12" stroke="#eee" stroke-width="2"/><path d="M5 9L14 1L19 6L11 15Z" fill="#e4e4e4" stroke="#1e1e1e"/><path d="M3 8L12 17" stroke="#1e1e1e" stroke-width="2.5"/></g>
<use href="#scn" x="1661" y="434"/>
<use href="#ad" x="1635" y="473"/><use href="#dots" x="1873" y="475"/>
<use href="#cube" x="1730" y="507"/><use href="#drop" x="1869" y="507"/>
<use href="#scn" x="1730" y="538"/>
<g transform="translate(1728 568)"><rect x="0" y="9" width="13" height="10" fill="#7b9ad0" stroke="#222"/><path d="M0 14H13M4 9V19M9 9V19" stroke="#222"/><rect x="8" y="1" width="11" height="11" fill="#d8d8d8" stroke="#222"/><path d="M12 3H16V9" stroke="#2c5aa0" fill="none"/></g>
<use href="#ad" x="1635" y="610"/><use href="#dots" x="1873" y="612"/>
<use href="#ud" x="1825" y="644"/><use href="#plus" x="1843" y="645"/>
<path d="M1869 652H1881" stroke="#222" stroke-width="4.5"/><path d="M1870 652H1880" stroke="#ececec" stroke-width="2.5"/>
<use href="#ud" x="1875" y="688"/><use href="#ud" x="1875" y="719"/>
<use href="#ad" x="1635" y="817"/><use href="#dots" x="1873" y="820"/>
<circle cx="1648.5" cy="883" r="4.5" fill="none" stroke="#4a4a4a"/><path d="M1646 883H1651M1648.5 880.5V885.5" stroke="#4a4a4a"/>
<path d="M1745 882.5H1763M1745 885.5H1763" stroke="#333" fill="none"/>
<use href="#plus" x="1868" y="852"/>
<path d="M1871 884H1882" stroke="#777" stroke-width="2.5"/>
<use href="#ar" x="1635" y="917"/><use href="#dots" x="1873" y="920"/>
</svg>
</body></html>
